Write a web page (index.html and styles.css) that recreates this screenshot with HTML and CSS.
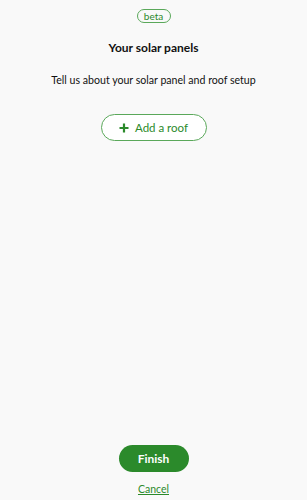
FILE: index.html
```html
<!DOCTYPE html>
<html>
<head>
<meta charset="utf-8">
<link rel="stylesheet" href="styles.css">
</head>
<body>
<div class="page">
  <div class="top">
    <span class="badge">beta</span>
    <h1 class="title">Your solar panels</h1>
    <p class="subtitle">Tell us about your solar panel and roof setup</p>
    <button class="add-btn">
      <svg class="plus" width="10" height="10" viewBox="0 0 10 10"><path d="M5 0.5V9.5M0.5 5H9.5" stroke="#2b8a2b" stroke-width="2.2"/></svg>
      <span>Add a roof</span>
    </button>
  </div>
  <div class="bottom">
    <button class="finish">Finish</button>
    <a class="cancel" href="#">Cancel</a>
  </div>
</div>
</body>
</html>
```
FILE: styles.css
```css
html, body {
  margin: 0;
  padding: 0;
  background: #f9f9f9;
}
body {
  font-family: "Lato", "Open Sans", sans-serif;
  color: #111;
}
.page {
  height: 500px;
  display: flex;
  flex-direction: column;
  justify-content: space-between;
  align-items: center;
}
.top {
  display: flex;
  flex-direction: column;
  align-items: center;
  padding-top: 9px;
}
.badge {
  box-sizing: border-box;
  width: 34px;
  height: 14px;
  border: 1px solid #5aa85a;
  border-radius: 8px;
  font-size: 10px;
  line-height: 12px;
  color: #2b8a2b;
  text-align: center;
}
.title {
  margin: 17px 0 0;
  font-size: 12px;
  font-weight: 700;
  line-height: 16px;
}
.subtitle {
  margin: 16px 0 0;
  font-size: 10.6px;
  line-height: 16px;
}
.add-btn {
  margin-top: 26px;
  box-sizing: border-box;
  width: 106px;
  height: 27px;
  border: 1px solid #5aa85a;
  border-radius: 14px;
  background: #fff;
  display: flex;
  align-items: center;
  justify-content: center;
  gap: 6px;
  font-family: inherit;
  font-size: 11.5px;
  color: #2b8a2b;
  padding: 0 0 0 0;
}
.bottom {
  display: flex;
  flex-direction: column;
  align-items: center;
  padding-bottom: 4px;
}
.finish {
  box-sizing: border-box;
  width: 70px;
  height: 27px;
  border: none;
  border-radius: 14px;
  background: #2b8a2b;
  color: #fff;
  font-family: inherit;
  font-size: 12px;
  font-weight: 700;
}
.cancel {
  margin-top: 10px;
  font-size: 10.5px;
  line-height: 14px;
  color: #2b8a2b;
}
```
